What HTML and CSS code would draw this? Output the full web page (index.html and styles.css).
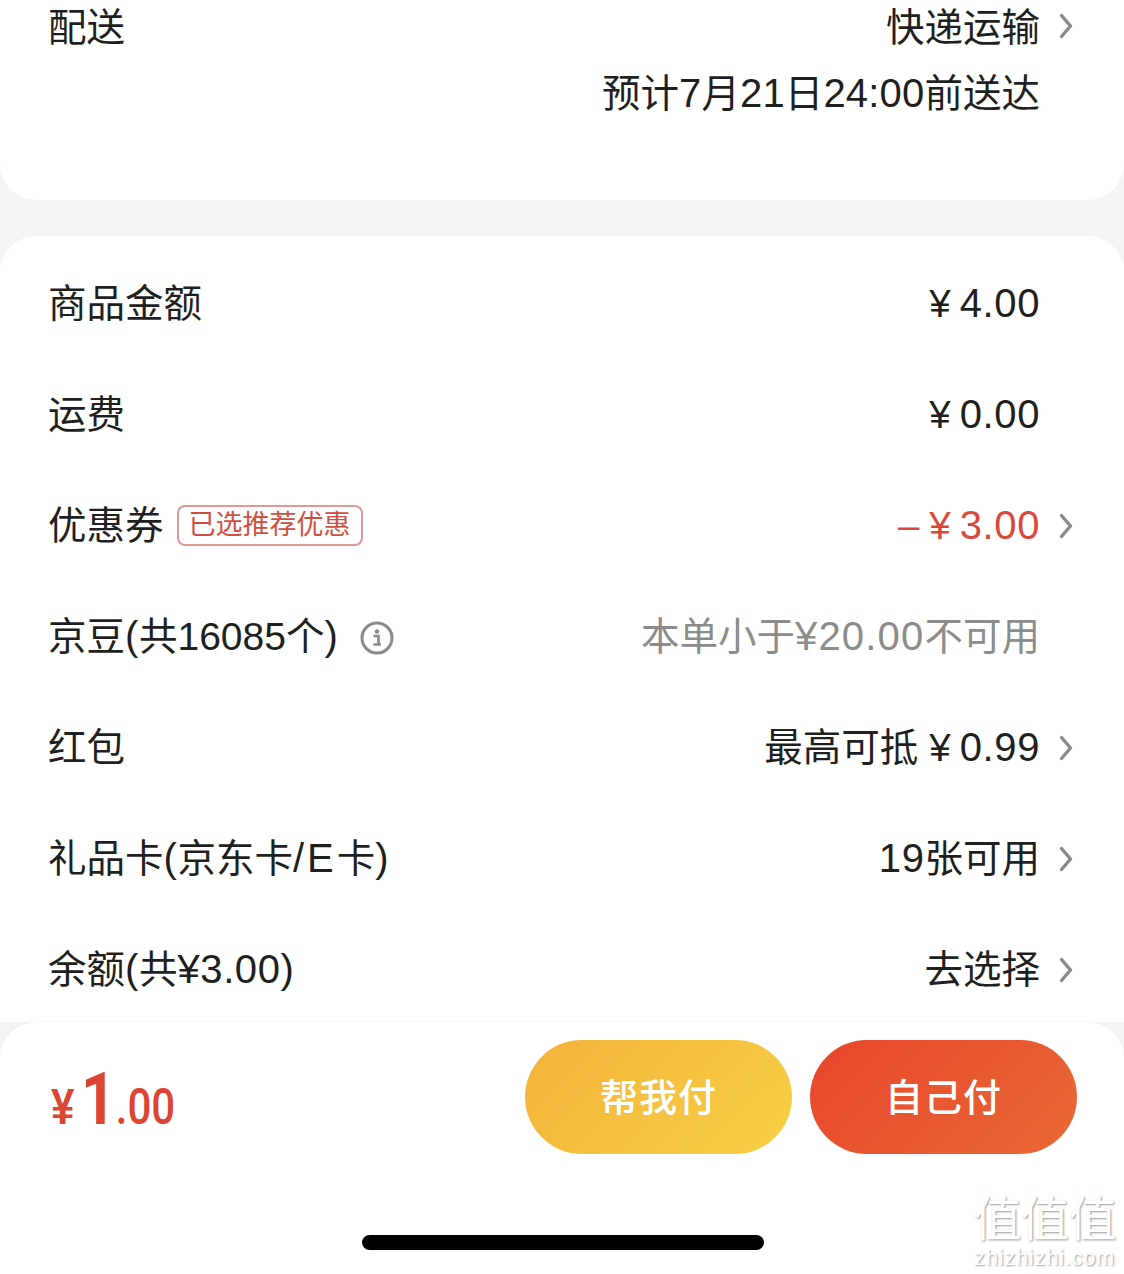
FILE: index.html
```html
<!DOCTYPE html>
<html lang="zh-CN">
<head>
    <meta charset="UTF-8">
    <meta name="viewport" content="width=device-width, initial-scale=1.0">
    <title>确认订单</title>
    <link rel="stylesheet" href="styles.css">
</head>
<body>
    <svg class="defs" width="0" height="0">
        <symbol id="chevron" viewBox="0 0 14 26">
            <path d="M2.5 2.5 L11.5 13 L2.5 23.5" fill="none" stroke="#8a8a8a" stroke-width="3.4" stroke-linecap="round" stroke-linejoin="round"/>
        </symbol>
    </svg>

    <div class="page">
        <section class="card card-delivery">
            <div class="row row-delivery">
                <span>配送</span>
                <span class="value">快递运输<svg class="chevron"><use href="#chevron"/></svg></span>
            </div>
            <div class="delivery-time">预计<span class="num">7</span>月<span class="num">21</span>日<span class="num">24:00</span>前送达</div>
        </section>

        <section class="card card-price">
            <div class="row">
                <span>商品金额</span>
                <span class="value no-arrow"><span class="yen">¥</span><span class="num">4.00</span></span>
            </div>
            <div class="row">
                <span>运费</span>
                <span class="value no-arrow"><span class="yen">¥</span><span class="num">0.00</span></span>
            </div>
            <div class="row">
                <span class="label">优惠券<span class="tag">已选推荐优惠</span></span>
                <span class="value red"><span class="minus">–</span><span class="yen">¥</span><span class="num">3.00</span><svg class="chevron"><use href="#chevron"/></svg></span>
            </div>
            <div class="row">
                <span class="label">京豆<span class="num">(</span>共<span class="num num-tight">16085</span>个<span class="num">)</span><svg class="info" viewBox="0 0 34 34">
                        <circle cx="17" cy="17" r="15" fill="none" stroke="#8a8a8a" stroke-width="3"/>
                        <circle cx="17" cy="10.5" r="2.2" fill="#8a8a8a"/>
                        <path d="M13.5 15 H18.5 V23.5 H21 M13.5 23.5 H21" fill="none" stroke="#8a8a8a" stroke-width="2.6"/>
                    </svg></span>
                <span class="value no-arrow grey">本单小于<span class="num">¥20.00</span>不可用</span>
            </div>
            <div class="row">
                <span>红包</span>
                <span class="value">最高可抵<span class="yen">¥</span><span class="num">0.99</span><svg class="chevron"><use href="#chevron"/></svg></span>
            </div>
            <div class="row">
                <span>礼品卡<span class="num">(</span>京东卡<span class="num num-wide">/E</span>卡<span class="num">)</span></span>
                <span class="value"><span class="num">19</span>张可用<svg class="chevron"><use href="#chevron"/></svg></span>
            </div>
            <div class="row">
                <span>余额<span class="num">(</span>共<span class="num">¥3.00)</span></span>
                <span class="value">去选择<svg class="chevron"><use href="#chevron"/></svg></span>
            </div>
        </section>

        <footer class="pay-bar">
            <div class="pay-main">
                <div class="total"><span class="total-yen">¥</span><span class="total-int">1</span><span class="total-dec">.00</span></div>
                <div class="pay-buttons">
                    <button class="pay-btn btn-help">帮我付</button>
                    <button class="pay-btn btn-self">自己付</button>
                </div>
            </div>
            <div class="home-bar"></div>
        </footer>

        <div class="watermark">
            <div class="wm-big">值值值</div>
            <div class="wm-small">zhizhizhi.com</div>
        </div>
    </div>
</body>
</html>
```

FILE: styles.css
```css
* {
    box-sizing: border-box;
}
body {
    margin: 0;
    background-color: #f5f5f5;
    font-family: "Liberation Sans", "Noto Sans CJK SC", sans-serif;
    font-size: 38.5px;
    color: #1f1f1f;
}
.defs {
    position: absolute;
}
.page {
    position: relative;
    width: 1124px;
    height: 1274px;
    overflow: hidden;
    display: flex;
    flex-direction: column;
}
.card {
    background-color: #fff;
    padding: 0 51px 0 48px;
}
.card-delivery {
    height: 200px;
    border-radius: 0 0 36px 36px;
    margin-bottom: 36px;
}
.card-price {
    height: 786px;
    padding-top: 12px;
    border-radius: 36px 36px 0 0;
    overflow: hidden;
}
.row {
    display: flex;
    justify-content: space-between;
    align-items: baseline;
    height: 111px;
    line-height: 111px;
    flex-shrink: 0;
}
.row-delivery {
    height: 54px;
    line-height: 56px;
}
.row-delivery .chevron {
    vertical-align: 2px;
}
.no-arrow {
    margin-right: 33px;
}
.delivery-time {
    margin-top: 13px;
    margin-right: 33px;
    text-align: right;
    line-height: 52px;
}
.num {
    font-size: 40px;
    letter-spacing: 0.6px;
}
.delivery-time .num {
    letter-spacing: 0.2px;
}
.grey .num {
    letter-spacing: 1.2px;
}
.num-tight {
    font-size: 39px;
    letter-spacing: 0;
}
.num-wide {
    letter-spacing: 3px;
}
.chevron {
    width: 14px;
    height: 26px;
    margin-left: 19px;
    vertical-align: 0;
}
.yen {
    margin: 0 9px 0 11px;
}
.minus {
    margin-right: -1px;
}
.red {
    color: #d9483b;
}
.grey {
    color: #8c8c8c;
}
.tag {
    display: inline-block;
    height: 41px;
    margin-left: 13px;
    padding: 0 10px;
    line-height: 36px;
    vertical-align: 5px;
    border: 2.5px solid #dc9a92;
    border-radius: 8px;
    font-size: 27px;
    color: #cf4f43;
}
.info {
    width: 34px;
    height: 34px;
    margin-left: 22px;
    vertical-align: -5px;
}
.pay-bar {
    flex: 1;
    background-color: #fff;
    border-radius: 36px 36px 0 0;
    box-shadow: 0 -1px 2px rgba(0, 0, 0, 0.03);
    z-index: 1;
}
.pay-main {
    display: flex;
    justify-content: space-between;
    align-items: center;
    padding: 18px 47px 0 51px;
}
.total {
    display: flex;
    align-items: baseline;
    color: #dc4433;
    font-family: Roboto, sans-serif;
    font-weight: 500;
    transform: scaleX(0.84);
    transform-origin: left center;
    padding-top: 4px;
}
.total-yen {
    font-family: "Liberation Sans", sans-serif;
    font-size: 50px;
    font-weight: 700;
    margin-right: 8px;
}
.total-int {
    font-size: 72px;
    font-weight: 700;
}
.total-dec {
    font-size: 50px;
}
.pay-buttons {
    display: flex;
    gap: 18px;
}
.pay-btn {
    width: 267px;
    height: 114px;
    padding-bottom: 6px;
    border: none;
    border-radius: 57px;
    color: #fff;
    font-family: "Noto Sans CJK SC", sans-serif;
    font-size: 38px;
    font-weight: 500;
    letter-spacing: 1px;
}
.btn-help {
    background: linear-gradient(135deg, #f3b139, #f7d045);
}
.btn-self {
    background: linear-gradient(135deg, #e8452b, #e96a35);
}
.home-bar {
    width: 402px;
    height: 15px;
    margin: 81px 0 0 362px;
    border-radius: 8px;
    background-color: #000;
}
.watermark {
    position: absolute;
    right: 8px;
    bottom: 7px;
    z-index: 2;
    text-align: center;
    color: #fff;
    text-shadow: 1px 1px 2px rgba(0, 0, 0, 0.4);
    font-family: "Liberation Sans", "Noto Sans CJK SC", sans-serif;
}
.wm-big {
    font-size: 48px;
    line-height: 50px;
    letter-spacing: -0.5px;
}
.wm-small {
    margin-top: 4px;
    font-size: 21.5px;
    line-height: 18px;
    letter-spacing: 0.9px;
}
```
